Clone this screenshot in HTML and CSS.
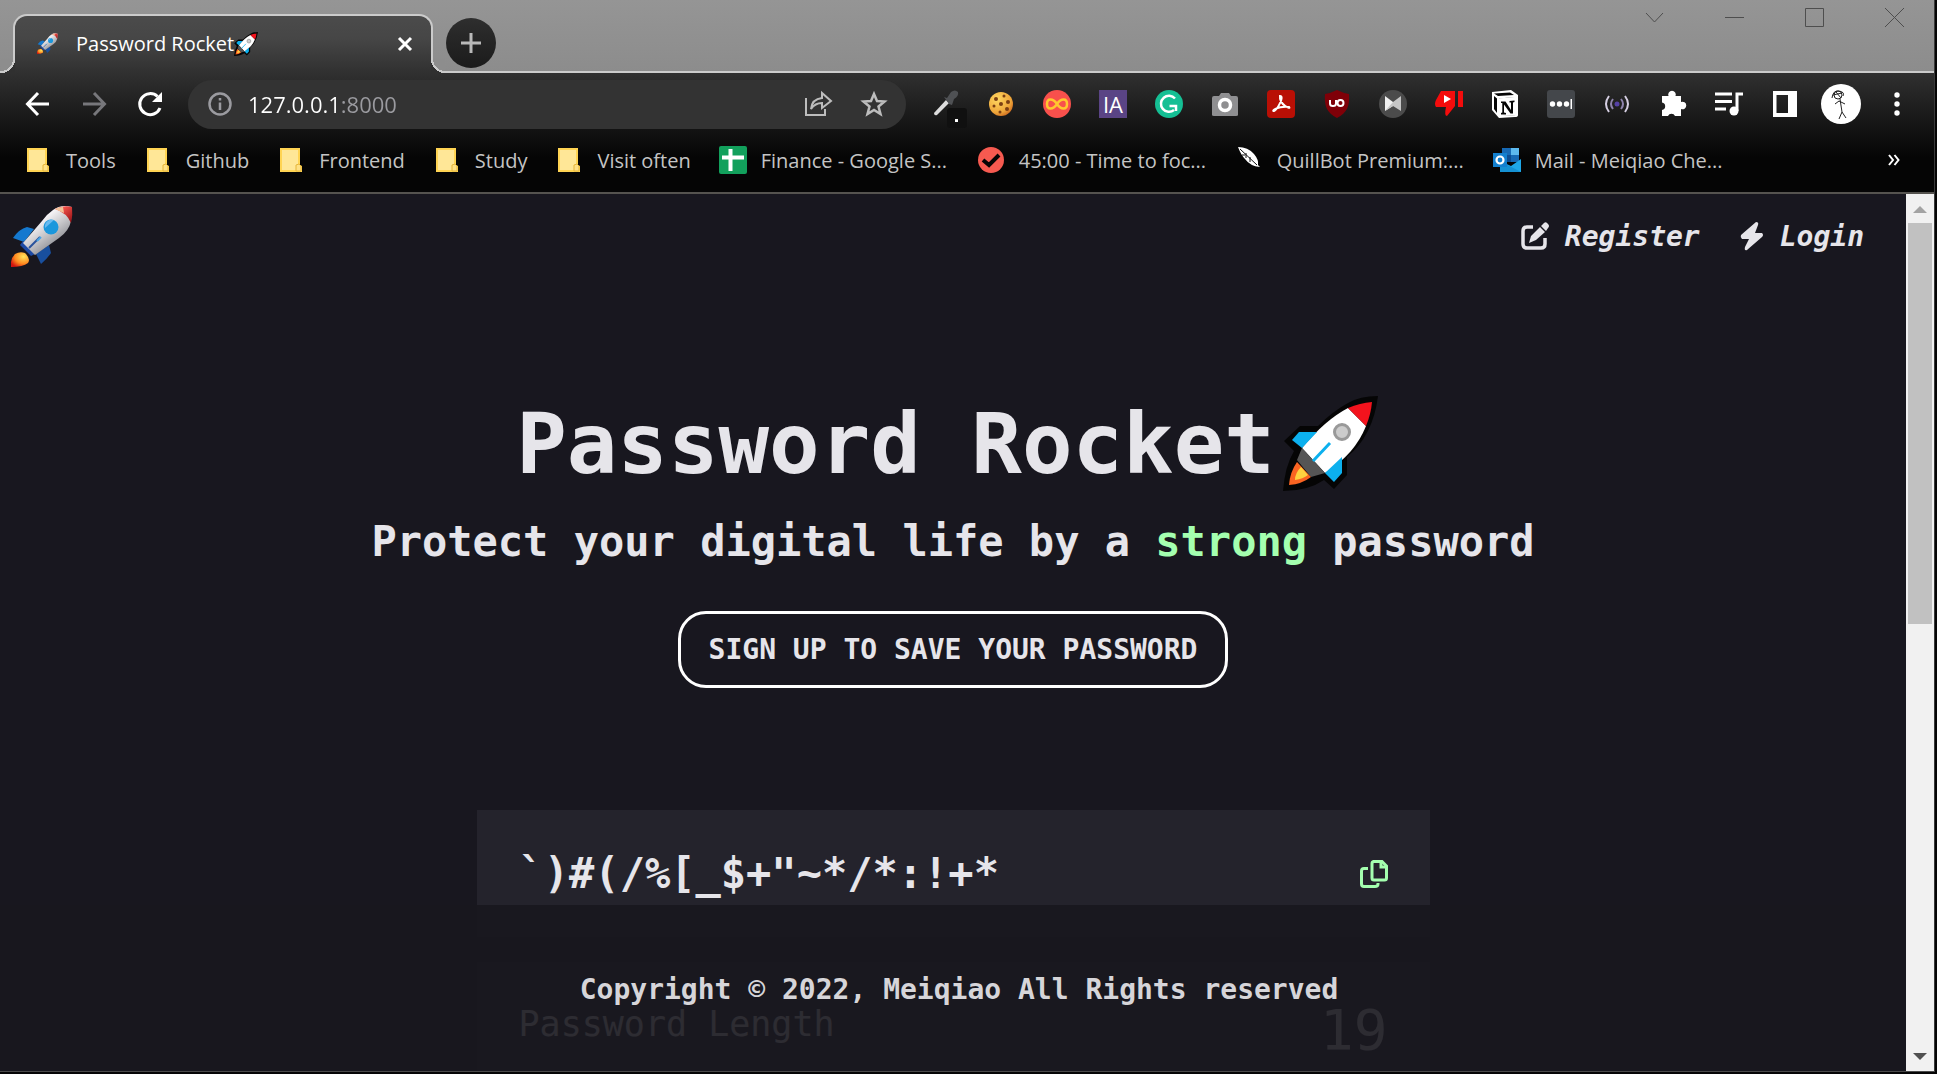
FILE: index.html
```html
<!DOCTYPE html>
<html lang="en">
<head>
<meta charset="utf-8">
<title>Password Rocket</title>
<link rel="stylesheet" href="styles.css">
</head>
<body>
<svg class="defs" aria-hidden="true">
  <defs>
    <linearGradient id="hull" x1="0.25" y1="0.2" x2="0.7" y2="0.8"><stop offset="0.2" stop-color="#f4f2f5"/><stop offset="0.6" stop-color="#c3c3c6"/><stop offset="1" stop-color="#8d8e94"/></linearGradient>
    <linearGradient id="nose" x1="0" y1="0" x2="1" y2="1"><stop offset="0.2" stop-color="#ff5a52"/><stop offset="1" stop-color="#8f0c10"/></linearGradient>
    <radialGradient id="fire" cx="0.7" cy="0.3" r="0.8"><stop offset="0" stop-color="#ffe45c"/><stop offset="0.6" stop-color="#ff8a1f"/><stop offset="1" stop-color="#d4150f"/></radialGradient>
    <radialGradient id="biscuit" cx="0.35" cy="0.3" r="0.8"><stop offset="0" stop-color="#ffd760"/><stop offset="0.7" stop-color="#eea63a"/><stop offset="1" stop-color="#c8601a"/></radialGradient>
    <symbol id="rocket-glossy" viewBox="0 0 62 62">
      <path d="M13 37 2 33Q8 24 16 22L23 24Z" fill="#1579cf"/>
      <path d="M38 40 40 48Q36 54 30 59L25 49Z" fill="#184f9e"/>
      <path d="M14 48Q20 54 17 58Q12 62 0 62Q-1 54 4 49Q9 46 14 48Z" fill="url(#fire)"/>
      <path d="M12 36 9 40 20 51 24 49Z" fill="#1c4aa5"/>
      <path d="M61 2Q50-1 42 5Q36 9 31 16L12 38 24 50 48 33Q58 26 60 16Z" fill="url(#hull)"/>
      <path d="M44 4Q52 0 61 2Q62 10 60 18Q56 8 44 4Z" fill="url(#nose)"/>
      <path d="M44 4Q47 2 52 2L53 8Z" fill="#f1c49a"/>
      <circle cx="40" cy="22" r="7.500" fill="#1b97dc"/><path d="M34 23a7 7 0 0 1 9-8Z" fill="#68baf0"/>
      <path d="M29 32 18 43" stroke="#2a539c" stroke-width="2"/><path d="M30 32 26 36" stroke="#49a4e4" stroke-width="2"/>
    </symbol>
    <symbol id="rocket-flat" viewBox="0 0 95 95">
      <path d="M95 0Q77 0 65 7Q50 15 35 30H17L1 45 11 55Q2 70 0 95Q25 95 41 84L51 93 64 79V61Q90 40 95 0Z" fill="#050505"/>
      <path d="M65 12Q42 24 19 52L42 77Q72 58 83 30Z" fill="#fff"/>
      <path d="M89 6Q77 7 65 12L83 30Q88 18 89 6Z" fill="#f3131d"/>
      <path d="M16 36H34L19 52 9 44Z M59 61V77L51 86 42 77Z" fill="#0cb0ee"/>
      <path d="M19 52 14 64 28 81 42 77Z" fill="#555"/>
      <path d="M14 66Q7 76 6 89Q19 88 28 81Z" fill="#fa6422"/>
      <path d="M18 71Q12 77 12 84Q20 83 25 79Z" fill="#ffd33f"/>
      <path d="M47 47 30 65" stroke="#0cb0ee" stroke-width="3"/>
      <circle cx="59" cy="36" r="7.500" fill="#ccc" stroke="#999" stroke-width="3"/>
    </symbol>
    <symbol id="folder" viewBox="0 0 28 28">
      <path d="M3 2h20v17l2 1v6H3Z" fill="#ffd453"/><path d="M5 4h16v20H5Z" fill="#ffe797"/><path d="M19 25v-6l3-1 2 2v5Z" fill="#ffe185" stroke="#e5b53a"/>
    </symbol>
  </defs>
</svg>
<div class="window">
  <header class="chrome">
    <div class="tabbar">
      <div class="tab">
        <svg class="tab-favicon"><use href="#rocket-glossy"/></svg>
        <span class="tab-title">Password Rocket<svg class="tab-emoji"><use href="#rocket-flat"/></svg></span>
        <button class="tab-close" aria-label="Close tab"><svg width="16" height="16" viewBox="0 0 16 16"><path d="M2 2 14 14M14 2 2 14" stroke="#fff" stroke-width="3"/></svg></button>
      </div>
      <button class="new-tab" aria-label="New tab"><svg width="22" height="22" viewBox="0 0 22 22"><path d="M11 1V21M1 11H21" stroke="#b9b9b9" stroke-width="3"/></svg></button>
      <div class="window-controls">
        <button aria-label="Search tabs"><svg viewBox="0 0 19 19"><path d="M1 5 9.500 14 18 5"/></svg></button>
        <button aria-label="Minimize"><svg viewBox="0 0 19 19"><path d="M0 9.500H19"/></svg></button>
        <button aria-label="Maximize"><svg viewBox="0 0 19 19"><path d="M.5.5H18.500V18.500H.5Z"/></svg></button>
        <button aria-label="Close"><svg viewBox="0 0 19 19"><path d="M0 0 19 19M19 0 0 19"/></svg></button>
      </div>
    </div>
    <div class="toolbar">
      <div class="history">
        <button aria-label="Back"><svg viewBox="0 0 28 28" fill="none" stroke="#fff" stroke-width="3"><path d="M25 14H5M14 3 3.500 14 14 25"/></svg></button>
        <button aria-label="Forward"><svg viewBox="0 0 28 28" fill="none" stroke="#77777b" stroke-width="3"><path d="M3 14H23M14 3 24.500 14 14 25"/></svg></button>
        <button aria-label="Reload"><svg viewBox="0 0 28 28"><path d="M24 18A10.500 10.500 0 1 1 21.500 6.500" fill="none" stroke="#fff" stroke-width="3"/><path d="M26 2V12H16Z" fill="#fff"/></svg></button>
      </div>
      <div class="omnibox">
        <svg viewBox="0 0 28 28"><circle cx="14" cy="14" r="10.500" fill="none" stroke="#9b9ba0" stroke-width="2.500"/><path d="M14 12.500V20M14 8V10.500" stroke="#9b9ba0" stroke-width="2.500"/></svg>
        <input class="url" type="text" aria-label="Address" value="127.0.0.1:8000">
        <button aria-label="Share"><svg viewBox="0 0 28 28" fill="none" stroke="#bdbdbd" stroke-width="2"><path d="M2 8V25H21V19M7 19Q8 9 18 8V3L27 11 18 18V13Q11 13 7 19Z"/></svg></button>
        <button aria-label="Bookmark this page"><svg viewBox="0 0 28 28" fill="none" stroke="#bdbdbd" stroke-width="2.500"><path d="M14 4 17 11 24.500 11.500 18.500 16.500 20.500 24 14 20 7.500 24 9.500 16.500 3.500 11.500 11 11Z"/></svg></button>
      </div>
      <div class="extensions">
        <button aria-label="Color picker"><svg viewBox="0 0 28 28"><path d="M3 23 15 10 18 13 6 25Q3 26 3 23Z" fill="#ddd"/><path d="M13 7 16 8 20 2Q24-1 27 2Q28 6 23 9L21 15 18 14Z" fill="#4f5154"/><rect x="16" y="18" width="20" height="20" rx="3" fill="#101010"/><rect x="24" y="29" width="3" height="3" fill="#fff"/></svg></button>
        <button aria-label="Cookies"><svg viewBox="0 0 28 28"><circle cx="14" cy="14" r="12" fill="url(#biscuit)"/><g fill="#7b3f14"><circle cx="9" cy="9" r="2"/><circle cx="17" cy="6" r="1.500"/><circle cx="14" cy="14" r="2"/><circle cx="7" cy="16" r="1.500"/><circle cx="21" cy="12" r="2"/><circle cx="13" cy="22" r="1.500"/><circle cx="20" cy="19" r="2"/></g></svg></button>
        <button aria-label="Infinity"><svg viewBox="0 0 28 28"><circle cx="14" cy="14" r="14" fill="#f8504c"/><path d="M14 14C10 8 4 8 4 14S10 20 14 14S24 8 24 14S18 20 14 14Z" fill="none" stroke="#ffc72f" stroke-width="2.500"/></svg></button>
        <button class="ext-ia" aria-label="IA">IA</button>
        <button aria-label="Grammar check"><svg viewBox="0 0 28 28"><circle cx="14" cy="14" r="14" fill="#15bf94"/><path d="M20 8.500A8 8 0 1 0 19 20M14.500 16H21V21" fill="none" stroke="#fff" stroke-width="2.500"/></svg></button>
        <button aria-label="Screenshot"><svg viewBox="0 0 28 28"><path d="M1 8Q1 6 3 6H8L10 3H18L20 6H25Q27 6 27 8V25Q27 26 25 26H3Q1 26 1 25Z" fill="#8f8f91"/><circle cx="14" cy="15" r="5.500" fill="#8f8f91" stroke="#fff" stroke-width="3.500"/></svg></button>
        <button aria-label="PDF"><svg viewBox="0 0 28 28"><rect width="28" height="28" rx="4" fill="#b90f05"/><path d="M13 6C18 6 10 20 7 21C4 21 10 16 22 17C25 20 12 15 13 6Z" fill="none" stroke="#fff" stroke-width="2"/></svg></button>
        <button aria-label="Ad blocker"><svg viewBox="0 0 28 28"><path d="M14 0Q20 3 26 4C27 16 24 23 14 28C4 23 1 16 2 4Q8 3 14 0Z" fill="#7f0008"/><path d="M7 10V13.500Q7 16 10 16T13 13.500V10" fill="none" stroke="#fff" stroke-width="2"/><circle cx="17.500" cy="13" r="3" fill="none" stroke="#fff" stroke-width="2"/></svg></button>
        <button aria-label="Mailtrack"><svg viewBox="0 0 28 28"><circle cx="14" cy="14" r="14" fill="#4b4b4b"/><path d="M6 6 14 12 14 16 6 21Z" fill="#f0f0f0"/><path d="M14 12 22 6V21L14 16 6 21Z" fill="#c6c6c6"/></svg></button>
        <button aria-label="Dislike"><svg viewBox="0 0 28 28"><path d="M6 1H20V16L12 26Q9 26 11 17H1Q-1 14 1 10ZM23 1H28V17H23Z" fill="#f40c0c"/><path d="M9 5 16 9 9 13Z" fill="#fff"/></svg></button>
        <button aria-label="Notes"><svg viewBox="0 0 28 28"><path d="M1 2 20 0 27 5V25Q27 27 24 27L8 28 1 20Z" fill="#fff"/><path d="M3 3.500 19 2.500 23 5 7 6ZM3 6 6 8.500V23L3 19ZM8 8.500 25 7V25L8 26Z" fill="#050505"/><path d="M10 9H12V25H10ZM23.500 9H25V25H23.500ZM8 8.500 25 7V10L10 11V26H8ZM10 23.500 25 22.500V25L10 26Z" fill="#fff"/><path d="M8 8.500 25 7V25L8 26Z" fill="#fff"/><path d="M10 11.500H14.500L20 20V12.500H18.500V11L23.500 10.500V12L22 12.500V23.500H19.500L13 14.500V22.500L15 23V24.500H10V23L11.300 22.500V13H10Z" fill="#050505"/></svg></button>
        <button aria-label="Passwords"><svg viewBox="0 0 28 28"><rect width="28" height="28" rx="3" fill="#44474b"/><g fill="#fff"><circle cx="5.500" cy="14" r="2.700"/><circle cx="12.500" cy="14" r="2.700"/><circle cx="19.500" cy="14" r="2.700"/><path d="M23.500 9H25V19H23.500Z"/></g></svg></button>
        <button aria-label="Broadcast"><svg viewBox="0 0 28 28" fill="none" stroke-width="2"><circle cx="14" cy="14" r="2.500" fill="#5541a5"/><path d="M10 9Q6 14 10 19M18 9Q22 14 18 19" stroke="#8f84ae"/><path d="M6 6Q0 14 6 22M22 6Q28 14 22 22" stroke="#d6cfe3"/></svg></button>
        <button aria-label="Extensions"><svg viewBox="0 0 28 28"><path d="M3 6H9.500A3.800 3.800 0 1 1 16.500 6H22V12A3.800 3.800 0 1 1 22 19V26H16A3.800 3.800 0 0 0 9 26H3V20A3.800 3.800 0 0 0 3 12.500Z" fill="#fff"/></svg></button>
        <button aria-label="Media"><svg viewBox="0 0 28 28"><path d="M0 4H17M0 11.500H17M0 19H11M22 21V4H28" fill="none" stroke="#fff" stroke-width="3"/><circle cx="19" cy="21" r="4.500" fill="#fff"/></svg></button>
        <button aria-label="Side panel"><svg viewBox="0 0 28 28"><path d="M2 1H26V27H2ZM5.500 5V23H17V5Z" fill="#fff" fill-rule="evenodd"/></svg></button>
      </div>
      <button class="avatar" aria-label="Profile"><svg viewBox="0 0 40 40" fill="none" stroke="#222" stroke-width="1"><circle cx="20" cy="20" r="20" fill="#fff" stroke="none"/><circle cx="17" cy="11" r="4"/><path d="M11 14Q12 6 18 7T22 12M12 11 21 9M15 8 20 14M19 15 21 28 18 35M21 28 25 34M14 20 18 17 24 20"/></svg></button>
      <button class="menu" aria-label="Menu"><svg viewBox="0 0 28 28" fill="#fff"><circle cx="14" cy="5" r="2.700"/><circle cx="14" cy="14" r="2.700"/><circle cx="14" cy="23" r="2.700"/></svg></button>
    </div>
    <nav class="bookmarks" aria-label="Bookmarks">
      <a href="#"><svg><use href="#folder"/></svg>Tools</a>
      <a href="#"><svg><use href="#folder"/></svg>Github</a>
      <a href="#"><svg><use href="#folder"/></svg>Frontend</a>
      <a href="#"><svg><use href="#folder"/></svg>Study</a>
      <a href="#"><svg><use href="#folder"/></svg>Visit often</a>
      <a class="site" href="#"><svg viewBox="0 0 28 28"><rect width="28" height="28" rx="2" fill="#12a05c"/><path d="M11.500 3V25M3 11.500H25" stroke="#fff" stroke-width="4"/></svg>Finance - Google S...</a>
      <a class="site" href="#"><svg viewBox="0 0 28 28"><circle cx="14" cy="14" r="13" fill="#f65a50"/><path d="M6 14 12 19 22 9" fill="none" stroke="#050505" stroke-width="4"/></svg>45:00 - Time to foc...</a>
      <a class="site" href="#"><svg viewBox="0 0 28 28"><path d="M3 1Q13 1 19 8Q24 14 23 19L25 21Q15 20 10 13Q6 9 3 1Z" fill="#fff"/><path d="M5 3 22 19M11 7V12M15 11V16M7 9H10" stroke="#111" fill="none"/></svg>QuillBot Premium:...</a>
      <a class="site" href="#"><svg viewBox="0 0 28 28"><path d="M9 2H26V16H9Z" fill="#1669b4"/><path d="M18 2H26V9H18Z" fill="#5cb9ee"/><path d="M9 9H18V16H9Z" fill="#0d4d91"/><path d="M7 15 18 20 28 13V26H7Z" fill="#1ea7e8"/><path d="M7 15 28 26H7Z" fill="#1591d3"/><rect y="7" width="14" height="14" fill="#1380cf"/><circle cx="7" cy="14" r="3.500" fill="none" stroke="#fff" stroke-width="2.200"/></svg>Mail - Meiqiao Che...</a>
      <button class="overflow" aria-label="More bookmarks"><svg width="12" height="12" viewBox="0 0 12 12"><path d="M1 1 5 6 1 11M6.500 1 10.500 6 6.500 11" fill="none" stroke="#fff" stroke-width="2"/></svg></button>
    </nav>
  </header>
  <div class="viewport">
    <div class="page">
      <header class="site-header">
        <a href="#" aria-label="Home"><svg class="logo"><use href="#rocket-glossy"/></svg></a>
        <nav class="site-nav">
          <a href="#"><svg width="28" height="28" viewBox="0 0 28 28"><path d="M12 5H6Q2 5 2 9V22Q2 26 6 26H20Q24 26 24 22V16" fill="none" stroke="#e6e5ea" stroke-width="3.500"/><path d="M8 21 10 14 19 5 24 10 15 18ZM20 4 23 1Q25-1 27 2Q29 4 27 6L25 9Z" fill="#e6e5ea"/></svg>Register</a>
          <a href="#"><svg width="24" height="28" viewBox="0 0 24 28"><path d="M16 0Q19 0 18 3L15 11H22Q24 13 22 15L7 28Q4 29 5 25L9 17H2Q0 15 1 13Z" fill="#e6e5ea"/></svg>Login</a>
        </nav>
      </header>
      <main>
        <section class="hero">
          <h1>Password Rocket<svg class="title-emoji"><use href="#rocket-flat"/></svg></h1>
          <p class="tagline">Protect your digital life by a <span class="strong">strong</span> password</p>
          <button class="signup">SIGN UP TO SAVE YOUR PASSWORD</button>
        </section>
        <section class="generator">
          <div class="panel result">
            <input class="password" type="text" aria-label="Generated password" readonly value="`)#(/%[_$+&quot;~*/*:!+*">
            <button class="copy" aria-label="Copy password"><svg width="28" height="28" viewBox="0 0 28 28" fill="none" stroke="#a4ffaf" stroke-width="3"><path d="M13 1.500H22L26.500 6V18Q26.500 20 24.500 20H14Q12 20 12 18V3.500Q12 1.500 14 1.500Z"/><path d="M21 1V7H27M8 8.500H4Q1.500 8.500 1.500 11V24Q1.500 26.500 4 26.500H15Q18 26.500 18 24V23"/></svg></button>
          </div>
          <div class="panel settings">
            <span class="length-label">Password Length</span>
            <output class="length-value">19</output>
          </div>
        </section>
      </main>
    </div>
    <footer class="site-footer">Copyright © 2022, Meiqiao All Rights reserved</footer>
    <div class="scrollbar">
      <button aria-label="Scroll up"><svg width="14" height="8" viewBox="0 0 14 8"><path d="M0 8 7 1 14 8Z" fill="#a3a3a3"/></svg></button>
      <div class="track"><div class="thumb"></div></div>
      <button aria-label="Scroll down"><svg width="14" height="8" viewBox="0 0 14 8"><path d="M0 0 7 7 14 0Z" fill="#505050"/></svg></button>
    </div>
  </div>
</div>
</body>
</html>
```
FILE: styles.css
```css
* { box-sizing: border-box; }
html, body { height: 100%; margin: 0; overflow: hidden; background: #050505; }
button { padding: 0; border: 0; background: none; color: inherit; font: inherit; display: flex; align-items: center; justify-content: center; }
input { padding: 0; border: 0; background: none; outline: 0; min-width: 0; }
a { color: inherit; text-decoration: none; }
svg { display: block; overflow: visible; flex: none; }
.defs { position: absolute; width: 0; height: 0; }

.window { display: flex; flex-direction: column; height: calc(100vh - 2px); margin-right: 2px; border-right: 1px solid #3a3a3a; border-bottom: 1px solid #4a4a4a; }

/* Browser frame */
.chrome { font-family: "Open Sans", "Noto Sans", sans-serif; font-size: 20px; color: #fff; border-bottom: 2px solid #55534f; background: #050505; }
.tabbar { display: flex; align-items: flex-end; height: 73px; padding-left: 13px; background: linear-gradient(#959595, #8c8c8c); box-shadow: inset 0 -2px #cbcbcb; }
.tab { position: relative; display: flex; align-items: center; width: 420px; height: 59px; padding: 0 18px 2px 22px; border: solid #cbcbcb; border-width: 2px 2px 0; border-radius: 14px 14px 0 0; background: linear-gradient(#4b4b4b, #464646 40%, #303030); }
.tab::before, .tab::after { content: ""; position: absolute; bottom: 0; width: 14px; height: 14px; }
.tab::before { left: -14px; background: radial-gradient(circle at 0 0, #8d8d8d 12px, #cbcbcb 12px 14px, #303030 14px); }
.tab::after { right: -14px; background: radial-gradient(circle at 100% 0, #8d8d8d 12px, #cbcbcb 12px 14px, #303030 14px); }
.tab-favicon { width: 21px; height: 21px; margin-right: 18px; }
.tab-title { display: flex; align-items: center; flex: 1; }
.tab-emoji { width: 24px; height: 24px; }
.new-tab { width: 50px; height: 50px; margin: 0 0 5px 13px; border-radius: 50%; background: linear-gradient(#2e2e2e, #1b1b1b); }
.window-controls { display: flex; align-self: flex-start; gap: 61px; margin-left: auto; padding: 8px 30px 0 0; }
.window-controls svg { width: 19px; height: 19px; fill: none; stroke: #4e4e4e; stroke-width: 1; }

.toolbar { display: flex; align-items: center; height: 62px; padding: 0 23px 0 24px; background: linear-gradient(#303030, #101010); }
.toolbar button, .toolbar button svg, .omnibox svg { width: 28px; height: 28px; flex: none; }
.history { display: flex; gap: 28px; margin-right: 24px; }
.omnibox { display: flex; align-items: center; flex: 1; height: 49px; padding: 0 18px; border-radius: 25px; background: #333; gap: 28px; }
.omnibox > svg { margin-right: -14px; }
.url { flex: 1; height: 32px; font: 22px "Open Sans", sans-serif; color: transparent; background: linear-gradient(90deg, #fff 93px, #9b9ba0 93px); -webkit-background-clip: text; background-clip: text; }
.extensions { display: flex; gap: 28px; margin: 0 22px 0 25px; }
.toolbar .ext-ia { background: #5a4485; font: 22px "Open Sans", sans-serif; }
.toolbar .avatar, .toolbar .avatar svg { width: 40px; height: 40px; }
.toolbar .menu { margin-left: 22px; }

.bookmarks { display: flex; align-items: center; height: 57px; padding: 0 34px 7px 24px; gap: 28px; color: #c4c4c4; white-space: nowrap; background: linear-gradient(#101010, #050505 40%); }
.bookmarks a { display: flex; align-items: center; gap: 14px; }
.bookmarks a svg { width: 28px; height: 28px; }
.bookmarks .site { width: 230px; }
.overflow { margin-left: auto; }

/* Web page */
.viewport { position: relative; display: flex; flex: 1; min-height: 0; overflow: hidden; background: #18171f; color: #e6e5ea; font-family: "DejaVu Sans Mono", monospace; font-weight: 700; }
.page { flex: 1; min-width: 0; }
.site-header { display: flex; align-items: center; justify-content: space-between; height: 84px; padding: 0 42px 0 11px; }
.logo { width: 62px; height: 62px; }
.site-nav { display: flex; gap: 40px; font-size: 28px; font-style: italic; }
.site-nav a { display: flex; align-items: center; gap: 16px; }
.hero { display: flex; flex-direction: column; align-items: center; padding-top: 110px; }
h1 { display: flex; align-items: center; margin: 0; font-size: 84px; line-height: 112px; white-space: nowrap; }
.title-emoji { width: 95px; height: 95px; margin: 0 12px 2px 8px; }
.tagline { margin: 14px 0 41px; font-size: 42px; line-height: 56px; white-space: nowrap; }
.strong { color: #a4ffaf; }
.signup { height: 77px; padding: 0 28px; border: 3px solid #fff; border-radius: 28px; font-size: 28px; white-space: nowrap; }
.generator { display: flex; flex-direction: column; gap: 25px; width: 50%; margin: 122px auto 0; }
.panel { display: flex; justify-content: space-between; padding: 42px; background: #24232c; }
.result { align-items: center; height: 127px; }
.password { flex: 1; height: 56px; color: inherit; font: inherit; font-size: 42px; }
.settings { min-height: 280px; font-weight: 400; }
.length-label { font-size: 35px; line-height: 40px; }
.length-value { font-size: 56px; line-height: 52px; }
.site-footer { position: absolute; left: 0; right: 28px; bottom: 0; height: 166px; padding: 69px 0 0 12px; font-size: 28px; line-height: 32px; text-align: center; color: #d6d5d9; background: rgba(24, 23, 30, 0.9); }

.scrollbar { display: flex; flex-direction: column; width: 28px; background: #f1f1f1; }
.scrollbar button { height: 29px; }
.track { flex: 1; padding: 0 2px; }
.thumb { height: 49%; background: #c1c1c1; }
```
